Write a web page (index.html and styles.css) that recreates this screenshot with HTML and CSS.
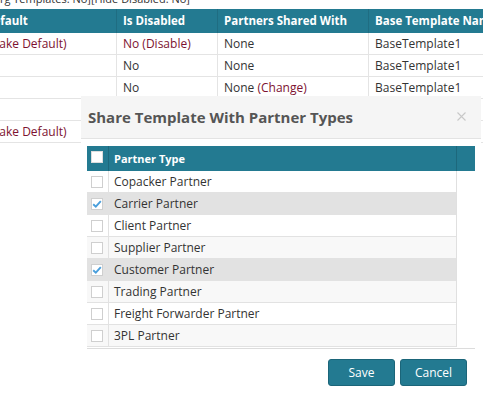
FILE: index.html
```html
<!DOCTYPE html>
<html>
<head>
<meta charset="utf-8">
<link rel="stylesheet" href="styles.css">
</head>
<body>
<div class="page">
  <div class="filters">[Show Org Templates: No][Hide Disabled: No]</div>
  <table class="templates">
    <colgroup><col class="c1"><col class="c2"><col class="c3"><col class="c4"></colgroup>
    <thead>
      <tr><th>Default</th><th>Is Disabled</th><th>Partners Shared With</th><th>Base Template Name</th></tr>
    </thead>
    <tbody>
      <tr><td><a class="lnk">(Make Default)</a></td><td><a class="lnk">No (Disable)</a></td><td>None</td><td>BaseTemplate1</td></tr>
      <tr><td></td><td>No</td><td>None</td><td>BaseTemplate1</td></tr>
      <tr><td></td><td>No</td><td>None <a class="lnk">(Change)</a></td><td>BaseTemplate1</td></tr>
      <tr><td></td><td></td><td></td><td></td></tr>
      <tr><td><a class="lnk">(Make Default)</a></td><td></td><td></td><td></td></tr>
    </tbody>
  </table>
</div>

<div class="modal">
  <div class="modal-header">
    <span class="modal-title">Share Template With Partner Types</span>
    <svg class="close" width="9" height="9" viewBox="0 0 9 9"><path d="M0.5 0.5L8.5 8.5M8.5 0.5L0.5 8.5" stroke="#c8c8c8" stroke-width="1.1" fill="none"/></svg>
  </div>
  <div class="modal-body">
    <div class="grid">
      <div class="grid-head">
        <div class="hcell hcheck"><span class="box head-box"></span></div>
        <div class="hcell htitle">Partner Type</div>
        <div class="hcell hgutter"></div>
      </div>
      <div class="grid-rows">
        <div class="row"><div class="ccell"><span class="box"></span></div><div class="tcell">Copacker Partner</div></div>
        <div class="row alt sel"><div class="ccell"><span class="box"><svg width="12" height="12" viewBox="0 0 12 12"><path d="M2.2 6.2L4.8 8.6L9.8 3.2" stroke="#4a9fdc" stroke-width="1.9" fill="none"/></svg></span></div><div class="tcell">Carrier Partner</div></div>
        <div class="row"><div class="ccell"><span class="box"></span></div><div class="tcell">Client Partner</div></div>
        <div class="row alt"><div class="ccell"><span class="box"></span></div><div class="tcell">Supplier Partner</div></div>
        <div class="row sel"><div class="ccell"><span class="box"><svg width="12" height="12" viewBox="0 0 12 12"><path d="M2.2 6.2L4.8 8.6L9.8 3.2" stroke="#4a9fdc" stroke-width="1.9" fill="none"/></svg></span></div><div class="tcell">Customer Partner</div></div>
        <div class="row alt"><div class="ccell"><span class="box"></span></div><div class="tcell">Trading Partner</div></div>
        <div class="row"><div class="ccell"><span class="box"></span></div><div class="tcell">Freight Forwarder Partner</div></div>
        <div class="row alt"><div class="ccell"><span class="box"></span></div><div class="tcell">3PL Partner</div></div>
      </div>
    </div>
    <div class="modal-footer">
      <button class="btn">Save</button>
      <button class="btn">Cancel</button>
    </div>
  </div>
</div>
</body>
</html>
```

FILE: styles.css
```css
html, body {
  margin: 0;
  padding: 0;
}
body {
  font-family: "Open Sans", "Liberation Sans", sans-serif;
  font-size: 12px;
  color: #333;
  background: #fff;
  width: 483px;
  height: 401px;
  overflow: hidden;
  position: relative;
}
.page {
  width: 483px;
}
.filters {
  margin: -9px 0 2px -43px;
  font-size: 11px;
  line-height: 16px;
  white-space: nowrap;
}
.templates {
  border-collapse: separate;
  border-spacing: 0;
  table-layout: fixed;
  margin-left: -21px;
  width: 539px;
}
.templates .c1 { width: 137px; }
.templates .c2 { width: 101px; }
.templates .c3 { width: 151px; }
.templates .c4 { width: 150px; }
.templates th {
  background: #237a91;
  color: #fff;
  font-weight: 700;
  font-size: 11.5px;
  text-align: left;
  box-sizing: border-box;
  height: 24px;
  line-height: 24px;
  padding: 0 6px;
  border-left: 1px solid #1f6d82;
  white-space: nowrap;
  overflow: hidden;
}
.templates th:first-child { border-left: none; }
.templates td {
  box-sizing: border-box;
  height: 22px;
  line-height: 21px;
  padding: 0 6px;
  border-bottom: 1px solid #e4e4e4;
  border-left: 1px solid #e4e4e4;
  white-space: nowrap;
  overflow: hidden;
}
.templates td:first-child { border-left: none; }
.lnk { color: #7d1230; }

.modal {
  position: absolute;
  left: 81px;
  top: 96px;
  width: 400px;
  height: 320px;
  background: #fff;
}
.modal-header {
  height: 43px;
  box-sizing: border-box;
  background: #f5f5f5;
  border-bottom: 1px solid #e3e3e3;
  display: flex;
  align-items: center;
  justify-content: space-between;
  padding: 0 15px 0 7px;
}
.modal-title {
  font-size: 15px;
  font-weight: 700;
  color: #555;
}
.close { margin-top: -2px; }
.modal-body {
  padding: 7px 6px 0 6px;
}
.grid {
  border-bottom: 1px solid #dcdcdc;
  padding-bottom: 1px;
}
.grid-head {
  display: grid;
  grid-template-columns: 22px 348px 18px;
  height: 25px;
  background: #237a91;
}
.hcell {
  box-sizing: border-box;
  height: 25px;
}
.hcheck {
  border-right: 1px solid #1d687c;
  padding: 5px 0 0 4px;
}
.htitle {
  border-right: 1px solid #1d687c;
  color: #fff;
  font-weight: 700;
  font-size: 11px;
  line-height: 25px;
  padding-left: 5px;
}
.box {
  display: flex;
  align-items: center;
  justify-content: center;
  width: 12px;
  height: 12px;
  box-sizing: border-box;
  border: 1px solid #cfcfcf;
  background: #fff;
}
.box svg { flex: none; }
.head-box { border-color: #dddddd; }
.grid-rows {
  width: 370px;
  box-sizing: border-box;
  border-right: 1px solid #e0e0e0;
}
.row {
  display: grid;
  grid-template-columns: 22px 1fr;
  height: 22px;
  box-sizing: border-box;
  border-bottom: 1px solid #e2e2e2;
  background: #fff;
}
.row.alt { background: #f8f8f8; }
.row.sel { background: #e2e2e2; }
.ccell {
  box-sizing: border-box;
  border-right: 1px solid #e2e2e2;
  display: flex;
  align-items: center;
  padding-left: 4px;
}
.tcell {
  line-height: 21px;
  padding-left: 5px;
  white-space: nowrap;
}
.modal-footer {
  display: flex;
  justify-content: flex-end;
  gap: 5px;
  padding: 10px 8px 0 0;
}
.btn {
  width: 67px;
  height: 27px;
  background: #237a91;
  border: 1px solid #1b6579;
  border-radius: 3px;
  color: #fff;
  font-family: "Open Sans", "Liberation Sans", sans-serif;
  font-size: 12px;
  padding: 0;
}
```
